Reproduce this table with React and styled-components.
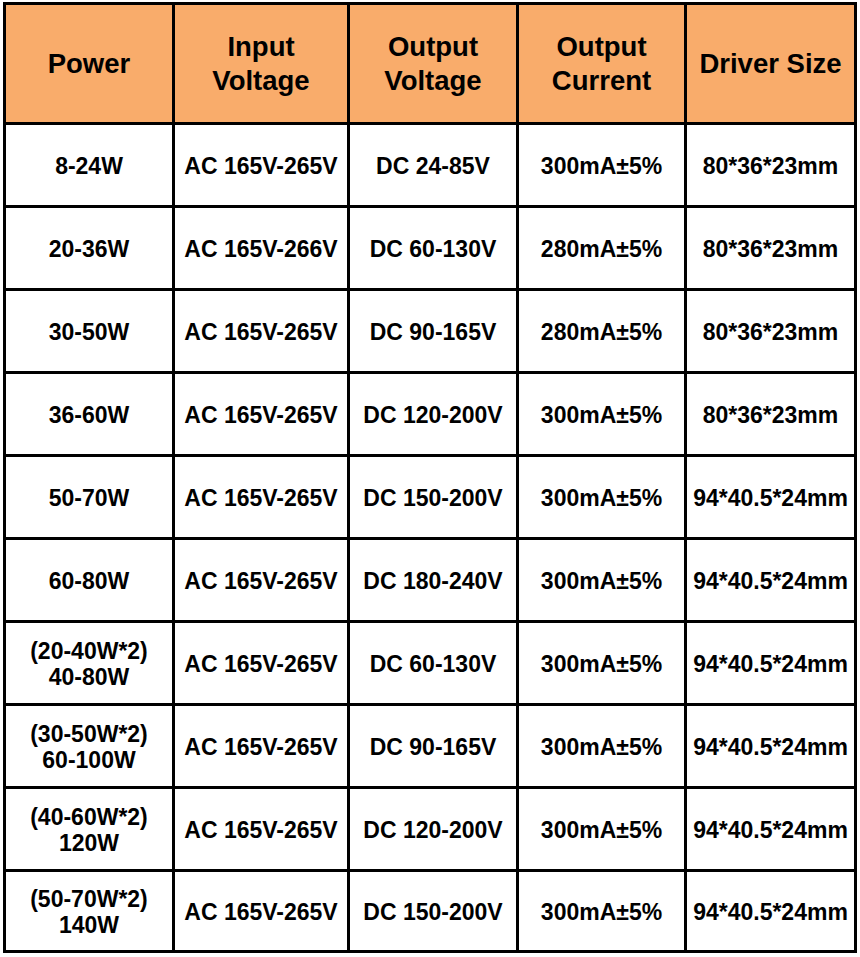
import React from "react";
import styled, { createGlobalStyle } from "styled-components";

const Global = createGlobalStyle`
  html, body { margin: 0; padding: 0; background: #ffffff; }
  body { font-family: "Liberation Sans", Arial, sans-serif; }
`;

const Page = styled.div`
  padding: 2px 0 0 3px;
`;

const Table = styled.div`
  display: grid;
  grid-template-columns: 166px 172px 166px 165px 167px;
  grid-template-rows: 117px repeat(9, 80px) 78px;
  gap: 3px;
  padding: 3px;
  background: #000000;
  width: fit-content;
`;

const HeadCell = styled.div`
  background: #f9ac6b;
  color: #000;
  display: flex;
  align-items: center;
  justify-content: center;
  text-align: center;
  font-weight: 700;
  font-size: 27.5px;
  line-height: 34px;
  padding-top: 1px;
`;

const Cell = styled.div`
  background: #ffffff;
  color: #000;
  display: flex;
  align-items: center;
  justify-content: center;
  text-align: center;
  font-weight: 700;
  font-size: 23px;
  line-height: 26px;
  white-space: nowrap;
  padding-top: 2px;
`;

const headers = [
  ["Power"],
  ["Input", "Voltage"],
  ["Output", "Voltage"],
  ["Output", "Current"],
  ["Driver Size"],
];

const rows = [
  [["8-24W"], "AC 165V-265V", "DC 24-85V", "300mA±5%", "80*36*23mm"],
  [["20-36W"], "AC 165V-266V", "DC 60-130V", "280mA±5%", "80*36*23mm"],
  [["30-50W"], "AC 165V-265V", "DC 90-165V", "280mA±5%", "80*36*23mm"],
  [["36-60W"], "AC 165V-265V", "DC 120-200V", "300mA±5%", "80*36*23mm"],
  [["50-70W"], "AC 165V-265V", "DC 150-200V", "300mA±5%", "94*40.5*24mm"],
  [["60-80W"], "AC 165V-265V", "DC 180-240V", "300mA±5%", "94*40.5*24mm"],
  [["(20-40W*2)", "40-80W"], "AC 165V-265V", "DC 60-130V", "300mA±5%", "94*40.5*24mm"],
  [["(30-50W*2)", "60-100W"], "AC 165V-265V", "DC 90-165V", "300mA±5%", "94*40.5*24mm"],
  [["(40-60W*2)", "120W"], "AC 165V-265V", "DC 120-200V", "300mA±5%", "94*40.5*24mm"],
  [["(50-70W*2)", "140W"], "AC 165V-265V", "DC 150-200V", "300mA±5%", "94*40.5*24mm"],
];

const Lines = ({ lines }) => (
  <div>
    {lines.map((l, i) => (
      <React.Fragment key={i}>
        {i > 0 && <br />}
        {l}
      </React.Fragment>
    ))}
  </div>
);

export default function App() {
  return (
    <>
      <Global />
      <Page>
        <Table>
          {headers.map((h, i) => (
            <HeadCell key={"h" + i}>
              <Lines lines={h} />
            </HeadCell>
          ))}
          {rows.map((r, ri) =>
            r.map((c, ci) => (
              <Cell key={ri + "-" + ci}>
                {Array.isArray(c) ? <Lines lines={c} /> : c}
              </Cell>
            ))
          )}
        </Table>
      </Page>
    </>
  );
}
